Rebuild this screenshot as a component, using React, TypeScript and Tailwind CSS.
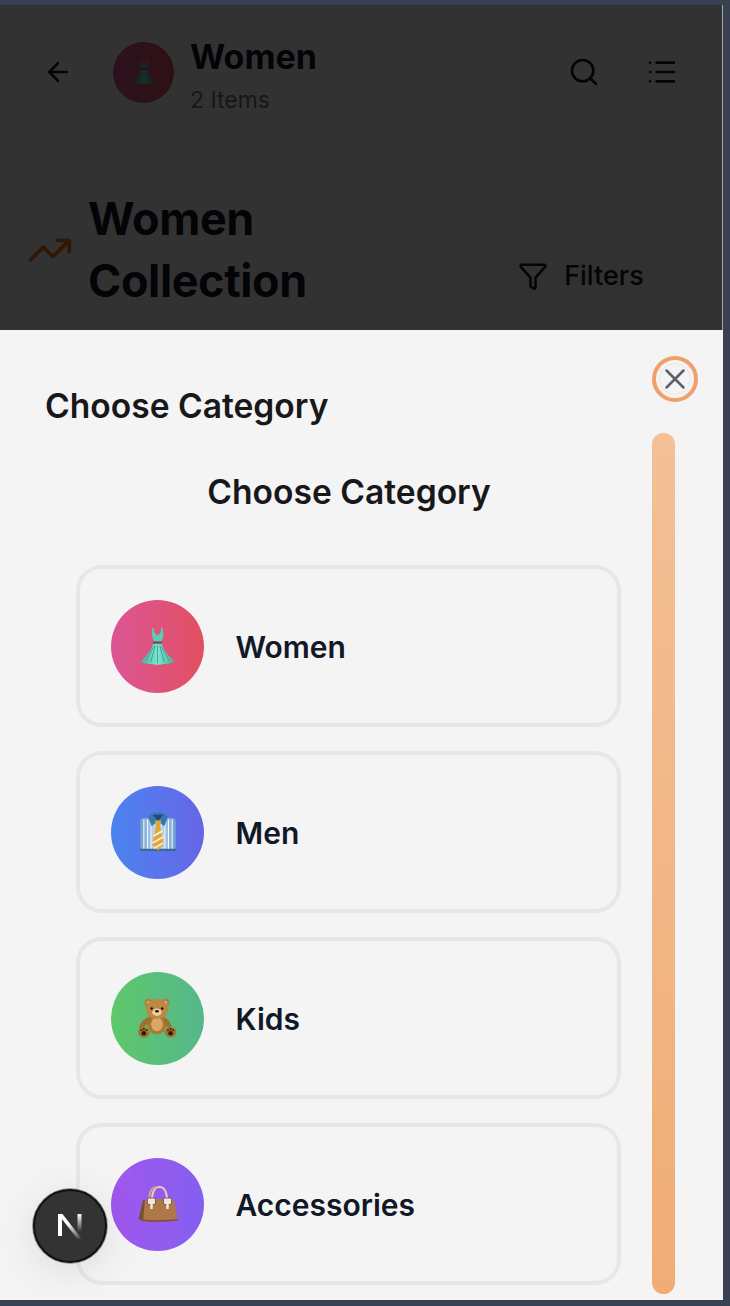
import { ArrowLeft, Funnel, List, Search, TrendingUp, X } from "lucide-react";

function Dress({ size = 45 }: { size?: number }) {
  return (
    <svg width={size} height={size} viewBox="0 0 40 40">
      <defs>
        <linearGradient id="skirt" x1="0" y1="0" x2="1" y2="0">
          <stop offset="0" stopColor="#46b09c" />
          <stop offset="0.5" stopColor="#7ce6cf" />
          <stop offset="1" stopColor="#46b09c" />
        </linearGradient>
      </defs>
      <path d="M15.5 3.5l1.3 0 .4 4 2.8 3 2.8-3 .4-4 1.3 0 .8 6.5-1.6 6h-7l-1.6-6z" fill="#58ceb6" />
      <path d="M16 15.500h8v2.200h-8z" fill="#8a3a5e" />
      <path d="M16 17.500h8c1 5 6 12 11 15.500-3 2.500-6 1.800-8 2.800-2-1-3.500.5-7 .5s-5-1.500-7-.5c-2-1-5-.3-8-2.800 5-3.500 10-10.500 11-15.500z" fill="url(#skirt)" />
      <path d="M18 19l-4 15M20 19v16M22 19l4 15M16.500 20l-7 13M23.500 20l7 13" stroke="#35978a" strokeWidth="0.700" fill="none" />
    </svg>
  );
}

function Shirt() {
  return (
    <svg width="42" height="42" viewBox="0 0 40 40">
      <defs>
        <linearGradient id="stripes" x1="0" y1="0" x2="1" y2="0">
          <stop offset="0" stopColor="#6f9ccd" />
          <stop offset="0.5" stopColor="#cfe3f6" />
          <stop offset="1" stopColor="#6f9ccd" />
        </linearGradient>
      </defs>
      <rect x="3" y="7" width="34" height="31" rx="3" fill="url(#stripes)" />
      <path d="M6.500 8v29M10 8v29M13.500 8v29M26.500 8v29M30 8v29M33.500 8v29" stroke="#eef6fd" strokeWidth="1" />
      <path d="M3 36h34v2H3z" fill="#3a689b" />
      <path d="M11 7c0-4 4-5.500 9-5.500s9 1.500 9 5.500l-3 7.500-6-5-6 5z" fill="#3878ad" />
      <path d="M15 3.500h10l-5 6z" fill="#1f4a78" />
      <path d="M17 9h6l-1 5 3.500 18-5.500 5.500-5.500-5.500 3.500-18z" fill="#e2a636" />
      <path d="M15.500 24l9-5M14.800 30.500l10.500-6M16.500 35.500l8.500-5" stroke="#f7edd2" strokeWidth="1.800" />
    </svg>
  );
}

function Teddy() {
  return (
    <svg width="42" height="42" viewBox="0 0 40 40">
      <circle cx="11" cy="5.500" r="3.800" fill="#b07c3c" />
      <circle cx="27" cy="5.500" r="3.800" fill="#b07c3c" />
      <circle cx="11" cy="5.500" r="2" fill="#dca765" />
      <circle cx="27" cy="5.500" r="2" fill="#dca765" />
      <ellipse cx="19" cy="25" rx="9.500" ry="10.500" fill="#ad7835" />
      <ellipse cx="19" cy="26" rx="5.500" ry="6.500" fill="#d9a868" />
      <path d="M11 19c-4 2-8 5-9 10l4 2c1-4 5-6 8-8z" fill="#a06e2f" />
      <path d="M27 20c3 2 5 4 6 8l-3 2c-2-3-3-4-5-6z" fill="#a06e2f" />
      <ellipse cx="19" cy="11.500" rx="10.500" ry="9.500" fill="#bd8843" />
      <ellipse cx="19" cy="14.500" rx="4.500" ry="3.500" fill="#ecd0a0" />
      <circle cx="14" cy="11" r="1.200" fill="#1d1209" />
      <circle cx="24" cy="11" r="1.200" fill="#1d1209" />
      <ellipse cx="19" cy="13.500" rx="1.800" ry="1.200" fill="#1d1209" />
      <ellipse cx="6.500" cy="33.500" rx="5.500" ry="5" fill="#a5722f" />
      <ellipse cx="32" cy="33.500" rx="5.500" ry="5" fill="#a5722f" />
      <circle cx="6.500" cy="34.500" r="2.200" fill="#2a1a0c" />
      <circle cx="32" cy="34.500" r="2.200" fill="#2a1a0c" />
      <circle cx="4" cy="31.500" r="0.900" fill="#2a1a0c" />
      <circle cx="6.500" cy="30.500" r="0.900" fill="#2a1a0c" />
      <circle cx="9" cy="31.500" r="0.900" fill="#2a1a0c" />
      <circle cx="29.500" cy="31.500" r="0.900" fill="#2a1a0c" />
      <circle cx="32" cy="30.500" r="0.900" fill="#2a1a0c" />
      <circle cx="34.500" cy="31.500" r="0.900" fill="#2a1a0c" />
    </svg>
  );
}

function Handbag() {
  return (
    <svg width="40" height="40" viewBox="0 0 40 40">
      <path d="M14 17c0-9 3-14 7.500-14s7.500 5 7.500 14" stroke="#ecccb8" strokeWidth="2.200" fill="none" />
      <path d="M11 17c0-9 3-14 8-14" stroke="#cda48b" strokeWidth="1.800" fill="none" />
      <path d="M7 16c8-1 20-1 29 0l3.500 19c-10 2-24 2-34.500 1z" fill="#b07747" />
      <path d="M7 16l-2 0-4.500 19 4.500 2z" fill="#7c4f2d" />
      <path d="M4.500 35.500c10 .8 24 .8 35-.5l.300 1.500c-11 1.500-25 1.500-35.500.8z" fill="#7f5130" />
      <rect x="9.500" y="14" width="8" height="6.500" rx="1.500" fill="#efe6dc" stroke="#6b4a32" strokeWidth="0.800" />
      <rect x="25.500" y="14" width="8" height="6.500" rx="1.500" fill="#efe6dc" stroke="#6b4a32" strokeWidth="0.800" />
      <path d="M13.500 20v5M29.500 20v5" stroke="#efe6dc" strokeWidth="2.500" />
    </svg>
  );
}

const categories = [
  { name: "Women", bg: "bg-gradient-to-r from-[#db5594] to-[#e24f61]", icon: <Dress /> },
  { name: "Men", bg: "bg-gradient-to-r from-[#4a83f0] to-[#6565e6]", icon: <Shirt /> },
  { name: "Kids", bg: "bg-gradient-to-r from-[#5fc76b] to-[#55b78a]", icon: <Teddy /> },
  { name: "Accessories", bg: "bg-gradient-to-r from-[#a157ed] to-[#835ff0]", icon: <Handbag /> },
];

export default function App() {
  return (
    <div className="h-[1306px] overflow-hidden bg-[#374151] pt-[5px] pr-[7px] pb-[6px] font-['Inter',sans-serif]">
      <div className="flex h-full flex-col">
        {/* page behind the sheet */}
        <div className="relative h-[325px] shrink-0 overflow-hidden border-r border-[#a3a3a3] bg-[#f5f5f5]">
          <div className="flex items-center pt-[26px] pr-[44px] pl-[43px]">
            <ArrowLeft size={30} strokeWidth={2} className="text-[#111827]" />
            <div className="ml-[40px] flex h-[61px] w-[61px] items-center justify-center rounded-full bg-gradient-to-r from-[#db5594] to-[#e24f61]">
              <Dress size={30} />
            </div>
            <div className="mt-[7px] ml-[16px]">
              <div className="text-[34px] leading-[38px] font-bold text-[#111827]">Women</div>
              <div className="mt-[11px] text-[23px] leading-[26px] text-[#6b7280]">2 Items</div>
            </div>
            <Search size={32} strokeWidth={2} className="ml-auto text-[#111827]" />
            <List size={32} strokeWidth={2} className="ml-[46px] text-[#111827]" />
          </div>
          <div className="mt-[69px] flex items-center pr-[30px] pl-[27px]">
            <TrendingUp size={46} strokeWidth={2} className="text-[#f97316]" />
            <div className="ml-[15px] text-[45px] leading-[62px] font-bold tracking-[-0.4px] text-[#111827]">
              Women
              <br />
              Collection
            </div>
            <div className="mt-[52px] ml-auto flex h-[84px] w-[222px] shrink-0 items-center justify-center gap-[16px] rounded-[22px] bg-[#ededed]">
              <Funnel size={30} strokeWidth={2} className="text-[#111827]" />
              <span className="text-[27px] font-medium text-[#111827]">Filters</span>
            </div>
          </div>
          <div className="absolute inset-0 bg-black/[.795]" />
        </div>

        {/* category sheet */}
        <div className="relative min-h-0 flex-1 overflow-hidden bg-[#f4f4f4]">
          <button className="absolute top-[26px] right-[25px] flex h-[46px] w-[46px] items-center justify-center rounded-full border-[4px] border-[#f0a06a] text-[#5b616c]">
            <span className="flex h-[32px] w-[32px] items-center justify-center rounded-full border border-[#f3e6dc]">
              <X size={34} strokeWidth={1.8} className="shrink-0" />
            </span>
          </button>
          <div className="absolute top-[103px] right-[48px] bottom-[6px] w-[23px] rounded-full bg-gradient-to-b from-[#f3c097] to-[#f0ad76]" />

          <h2 className="pt-[54px] pl-[45px] text-[33.6px] leading-[44px] font-semibold text-[#18181b]">Choose Category</h2>
          <h3 className="mt-[42px] w-[698px] text-center text-[33.6px] leading-[44px] font-semibold text-[#18181b]">
            Choose Category
          </h3>
          <div className="mt-[51px] ml-[76px] flex w-[545px] flex-col gap-[24px]">
            {categories.map((c) => (
              <div
                key={c.name}
                className="flex h-[162px] shrink-0 items-center rounded-[26px] border-[4px] border-[#e5e7eb] pl-[31px]"
              >
                <div className={`flex h-[93px] w-[93px] items-center justify-center rounded-full ${c.bg}`}>{c.icon}</div>
                <span className="mt-[2px] ml-[31.5px] text-[30px] font-semibold text-[#111827]">{c.name}</span>
              </div>
            ))}
          </div>

          {/* dev badge */}
          <div className="absolute top-[859px] left-[33px] flex h-[74px] w-[74px] items-center justify-center rounded-full border-[2px] border-[#111] bg-[#333] shadow-[0_0_0_1px_#999,0_8px_40px_rgba(0,0,0,0.1)]">
            <svg width="30" height="30" viewBox="0 0 30 30">
              <defs>
                <linearGradient id="nbar" x1="0" y1="0" x2="0" y2="1">
                  <stop offset="0" stopColor="#fff" />
                  <stop offset="1" stopColor="#fff" stopOpacity="0" />
                </linearGradient>
                <linearGradient id="ndiag" x1="0" y1="0" x2="1" y2="1">
                  <stop offset="0.4" stopColor="#fff" />
                  <stop offset="1" stopColor="#fff" stopOpacity="0" />
                </linearGradient>
              </defs>
              <path d="M3 3h4v22H3z" fill="#fff" />
              <path d="M3 3h4.500L27 28h-4.500z" fill="url(#ndiag)" />
              <path d="M22.500 3h4v18h-4z" fill="url(#nbar)" />
            </svg>
          </div>
        </div>
      </div>
    </div>
  );
}
